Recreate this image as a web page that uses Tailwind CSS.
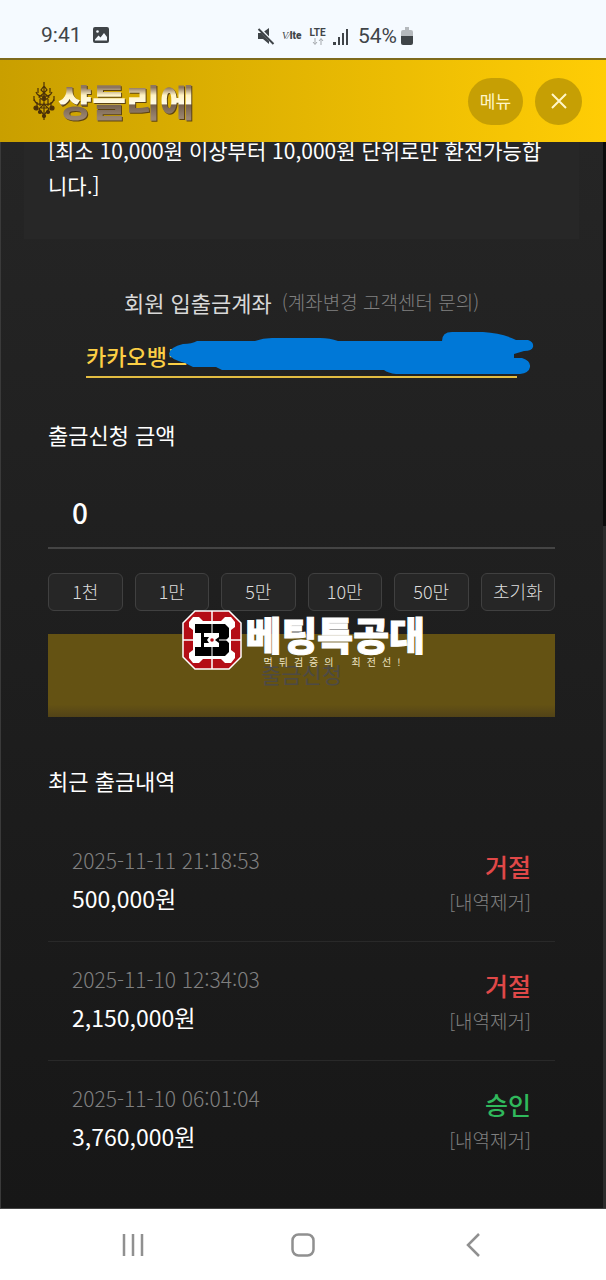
<!DOCTYPE html>
<html lang="ko">
<head>
  <meta charset="UTF-8">
  <meta name="viewport" content="width=device-width, initial-scale=1.0" />
  <title>샹들리에 - 출금신청</title>
  <script src="https://cdn.jsdelivr.net/npm/@tailwindcss/browser@4"></script>
  <style>body { font-family: "Noto Sans CJK KR", sans-serif; }</style>
</head>
<body class="min-h-screen flex flex-col bg-[#181818] text-white">
  <!-- Phone status bar -->
  <div class="h-[58px] shrink-0 bg-[#f5faff] text-[#3f4448] flex items-center pt-3 pl-[41px] pr-6 relative font-[Roboto]">
    <span class="text-[21px] leading-6">9:41</span>
    <svg class="ml-[11px] w-4 h-4" viewBox="0 0 16 16"><rect width="16" height="16" rx="2" fill="#3f4448"/><path d="M2 12.500 5.500 8.500 7.500 10.500 11 6 14 10V13.500H2Z" fill="#f5faff"/><circle cx="4.500" cy="4.500" r="1.300" fill="#f5faff"/></svg>
    <div class="absolute left-[257px] top-6 h-6 flex items-center">
      <svg class="w-[18px] h-[18px]" viewBox="0 0 18 18"><path d="M1 6H5L12 1V17L6 12H1Z" fill="#3f4448"/><path d="M1 0 17 17" stroke="#f5faff" stroke-width="3"/><path d="M1.500 2 16.500 17" stroke="#3f4448" stroke-width="2"/></svg>
      <span class="ml-[7px] w-6 flex items-baseline text-[10px] leading-3"><i class="font-[Liberation_Serif] whitespace-nowrap">V⁄</i><b class="font-black">lte</b></span>
      <span class="ml-[2px] w-[19px] flex flex-col items-center">
        <b class="text-[10px] leading-[11px] font-bold">LTE</b>
        <svg class="w-3 h-[7px]" viewBox="0 0 12 7" fill="none" stroke="#a5a9ad"><path d="M3 0V6M1 4 3 6.500 5 4M9 7V1M7 3 9 .5 11 3"/></svg>
      </span>
      <svg class="ml-[6px] w-4 h-[17px]" viewBox="0 0 16 17" fill="#3f4448"><rect y="14" width="3" height="3"/><rect x="5" y="9" width="2" height="8"/><rect x="9" y="5" width="2" height="12"/><rect x="13" y="1" width="2" height="16"/></svg>
      <span class="ml-[9px] text-[21px] leading-6">54%</span>
      <svg class="ml-1 w-3 h-[18px]" viewBox="0 0 12 18"><path d="M4 0H8V3H10Q12 3 12 5V9H0V5Q0 3 2 3H4Z" fill="#b5b9bd"/><path d="M0 9H12V16Q12 18 10 18H2Q0 18 0 16Z" fill="#3f4448"/></svg>
    </div>
  </div>

  <!-- Header -->
  <header class="relative z-10 h-[84px] shrink-0 border-t-2 border-[#7d6a1c] bg-linear-to-r from-[#c99f00] to-[#ffcd05] flex items-center justify-between pl-8 pr-6">
    <a href="#" class="flex items-center">
      <svg class="w-6 h-[38px]" viewBox="0 0 24 38" fill="none" stroke="#4b3008" stroke-width="1.200">
        <path d="M12 0V38M12 4 9 8 12 11 15 8ZM12 11 7 15 12 19 17 15ZM6 6V11M18 6V11M4 10Q6 15 12 14Q18 15 20 10M2 17Q4 24 12 22Q20 24 22 17M2 14V19M22 14V19M5 20V27M19 20V27M8 17V24M16 17V24"/>
        <path d="M12 22 7 27 12 33 17 27ZM9 26H15"/>
        <g fill="#4b3008"><circle cx="4" cy="26" r="2"/><circle cx="20" cy="26" r="2"/><circle cx="8" cy="30" r="1.500"/><circle cx="16" cy="30" r="1.500"/><circle cx="12" cy="34" r="1.500"/><circle cx="12" cy="16" r="1.500"/></g>
      </svg>
      <span class="ml-[2px] text-[37px] leading-[42px] font-black text-transparent bg-clip-text bg-[linear-gradient(#8d7560_18%,#fff3c4_36%,#fffbe8_56%,#77624f_60%,#9a8570_90%)] drop-shadow-[1px_1px_0_#5d4310]">샹들리에</span>
    </a>
    <div class="flex gap-3">
      <button class="h-[47px] w-[55px] rounded-full bg-[#c69f04] text-[17px] text-[#fff6c8]">메뉴</button>
      <button aria-label="닫기" class="size-[47px] rounded-full bg-[#c69f04] flex items-center justify-center">
        <svg class="size-4" viewBox="0 0 16 16" stroke="#fff6c8" stroke-width="2"><path d="M1 1 15 15M15 1 1 15"/></svg>
      </button>
    </div>
  </header>

  <main class="relative grow bg-linear-to-b from-[#252525] to-[#171717] pl-12 pr-[51px] border-b border-[#444]">
    <div class="absolute inset-y-0 left-0 w-px bg-[#3a3a3a]"></div>
    <div class="absolute inset-y-0 right-0 w-[3px] bg-[#2c2c2c]"></div>
    <div class="absolute top-0 right-0 w-[3px] h-96 bg-[#0c0c0c]"></div>

    <div class="-mt-[9px] -mx-6 pl-6 pr-9 pb-9 bg-[#272727]">
      <p class="text-[21px] leading-[35px] break-all">[최소 10,000원 이상부터 10,000원 단위로만 환전가능합니다.]</p>
    </div>

    <!-- Account -->
    <div class="mt-[49px] flex items-center justify-center gap-[10px] leading-7">
      <label for="account" class="text-[22px] text-[#d8d8d8]">회원 입출금계좌</label>
      <span class="text-[19px] font-light text-[#808080]">(계좌변경 고객센터 문의)</span>
    </div>
    <div class="relative mt-[22px] mx-[38px]">
      <input id="account" readonly value="카카오뱅크" class="block w-full h-10 pb-1 border-b-2 border-[#e3bd42] text-[22px] font-medium text-[#fccf45] outline-none" />
      <svg class="absolute left-[79px] -top-2 w-[370px] h-[46px]" viewBox="165 330 370 46" fill="#0078d7">
        <path d="M169 354Q170 347 183 344Q192 344 197 341L255 341Q263 338 272 338L320 338Q330 338 338 341L442 341Q442 332 452 332L483 332Q502 333 516 340L528 340Q534 342 533 347Q532 351 524 351L514 354 514 358 522 358Q531 361 530 367Q529 373 520 374L396 374Q388 373 384 370L222 370 216 367 193 367 185 363Q170 359 169 354Z"/>
      </svg>
    </div>

    <!-- Amount -->
    <label for="amount" class="block mt-10 text-[22px] leading-8">출금신청 금액</label>
    <input id="amount" value="0" class="block mt-[27px] w-full h-[72px] px-6 border-b-2 border-[#444] text-[28px] font-medium outline-none" />
    <div class="mt-6 grid grid-cols-6 gap-3 text-[18px] leading-[34px] font-light text-[#ddd]">
      <button class="h-[38px] pb-0.5 rounded-md border border-[#404040] bg-[#262626]">1천</button>
      <button class="h-[38px] pb-0.5 rounded-md border border-[#404040] bg-[#262626]">1만</button>
      <button class="h-[38px] pb-0.5 rounded-md border border-[#404040] bg-[#262626]">5만</button>
      <button class="h-[38px] pb-0.5 rounded-md border border-[#404040] bg-[#262626]">10만</button>
      <button class="h-[38px] pb-0.5 rounded-md border border-[#404040] bg-[#262626]">50만</button>
      <button class="h-[38px] pb-0.5 rounded-md border border-[#404040] bg-[#262626]">초기화</button>
    </div>

    <div class="relative mt-[23px]">
      <button disabled class="block w-full h-[83px] pb-1 bg-linear-to-b from-[#645213] from-85% to-[#524317] text-[22px] text-[#4d4a45]">출금신청</button>
      <!-- Watermark -->
      <div class="absolute -top-6 left-1/2 -translate-x-1/2 flex gap-1 pl-1 w-[248px]">
        <svg class="size-[60px] shrink-0" viewBox="0 0 60 60">
          <path d="M13 1H47L59 13V47L47 59H13L1 47V13Z" fill="#b40d16" stroke="#fff" stroke-width="1.500"/>
          <path d="M7 12 11 7H17L21 11H39L43 7H49L53 12V17L49 20V40L53 43V48L49 53H43L39 49H21L17 53H11L7 48V43L11 40V20L7 17Z" fill="#fff"/>
          <path d="M30 1V14M30 46V59M1 30H14M46 30H59" stroke="#fff" stroke-width="1.500"/>
          <path d="M13 14H43L47 18V27L44 30 47 33V42L43 46H13V37H19V23H13Z" fill="#000"/>
          <path d="M22 23H37V27L33 30 37 33V37H22V33H27L25 30 27 27H22Z" fill="#fff"/>
          <path d="M30 14V23M30 37V46M37 30H47" stroke="#fff"/>
          <circle cx="30" cy="30" r="1.800" fill="#b40d16"/>
        </svg>
        <div>
          <p class="text-[39px] leading-[46px] font-black whitespace-nowrap [-webkit-text-stroke:1px_white]">베팅특공대</p>
          <p class="pl-[18px] flex gap-[6px] text-[10px] leading-3 text-[#eee4c4]"><span>먹</span><span>튀</span><span>검</span><span>증</span><span>의</span><span class="ml-3">최</span><span>전</span><span>선</span><span>!</span></p>
        </div>
      </div>
    </div>

    <!-- Recent withdrawals -->
    <h2 class="mt-[47px] text-[22px] leading-8">최근 출금내역</h2>
    <ul class="mt-[27px]">
      <li class="px-6 py-[21px] flex justify-between items-start border-b border-[#292929]">
        <div>
          <p class="text-[21px] leading-8 font-light text-[#808080]">2025-11-11 21:18:53</p>
          <p class="mt-1 text-[23px] leading-9">500,000원</p>
        </div>
        <div class="mt-1 text-right">
          <p class="text-[25px] leading-9 font-medium text-[#e04848]">거절</p>
          <button class="block ml-auto text-[19px] leading-9 font-light text-[#808080]">[내역제거]</button>
        </div>
      </li>
      <li class="px-6 py-[21px] flex justify-between items-start border-b border-[#292929]">
        <div>
          <p class="text-[21px] leading-8 font-light text-[#808080]">2025-11-10 12:34:03</p>
          <p class="mt-1 text-[23px] leading-9">2,150,000원</p>
        </div>
        <div class="mt-1 text-right">
          <p class="text-[25px] leading-9 font-medium text-[#e04848]">거절</p>
          <button class="block ml-auto text-[19px] leading-9 font-light text-[#808080]">[내역제거]</button>
        </div>
      </li>
      <li class="px-6 py-[21px] flex justify-between items-start">
        <div>
          <p class="text-[21px] leading-8 font-light text-[#808080]">2025-11-10 06:01:04</p>
          <p class="mt-1 text-[23px] leading-9">3,760,000원</p>
        </div>
        <div class="mt-1 text-right">
          <p class="text-[25px] leading-9 font-medium text-[#30b95c]">승인</p>
          <button class="block ml-auto text-[19px] leading-9 font-light text-[#808080]">[내역제거]</button>
        </div>
      </li>
    </ul>
  </main>

  <!-- Phone navigation -->
  <nav class="h-[71px] shrink-0 bg-white px-12 grid grid-cols-3 items-center justify-items-center">
    <button aria-label="최근 앱"><svg class="size-6" viewBox="0 0 24 24" stroke="#909090" stroke-width="2.500"><path d="M3 1V23M12 1V23M21 1V23"/></svg></button>
    <button aria-label="홈"><svg class="size-6" viewBox="0 0 24 24" fill="none" stroke="#909090" stroke-width="2.500"><rect x="1.500" y="1.500" width="21" height="21" rx="6"/></svg></button>
    <button aria-label="뒤로"><svg class="size-6" viewBox="0 0 24 24" fill="none" stroke="#909090" stroke-width="2.500"><path d="M18 1 7 12 18 23"/></svg></button>
  </nav>
</body>
</html>
